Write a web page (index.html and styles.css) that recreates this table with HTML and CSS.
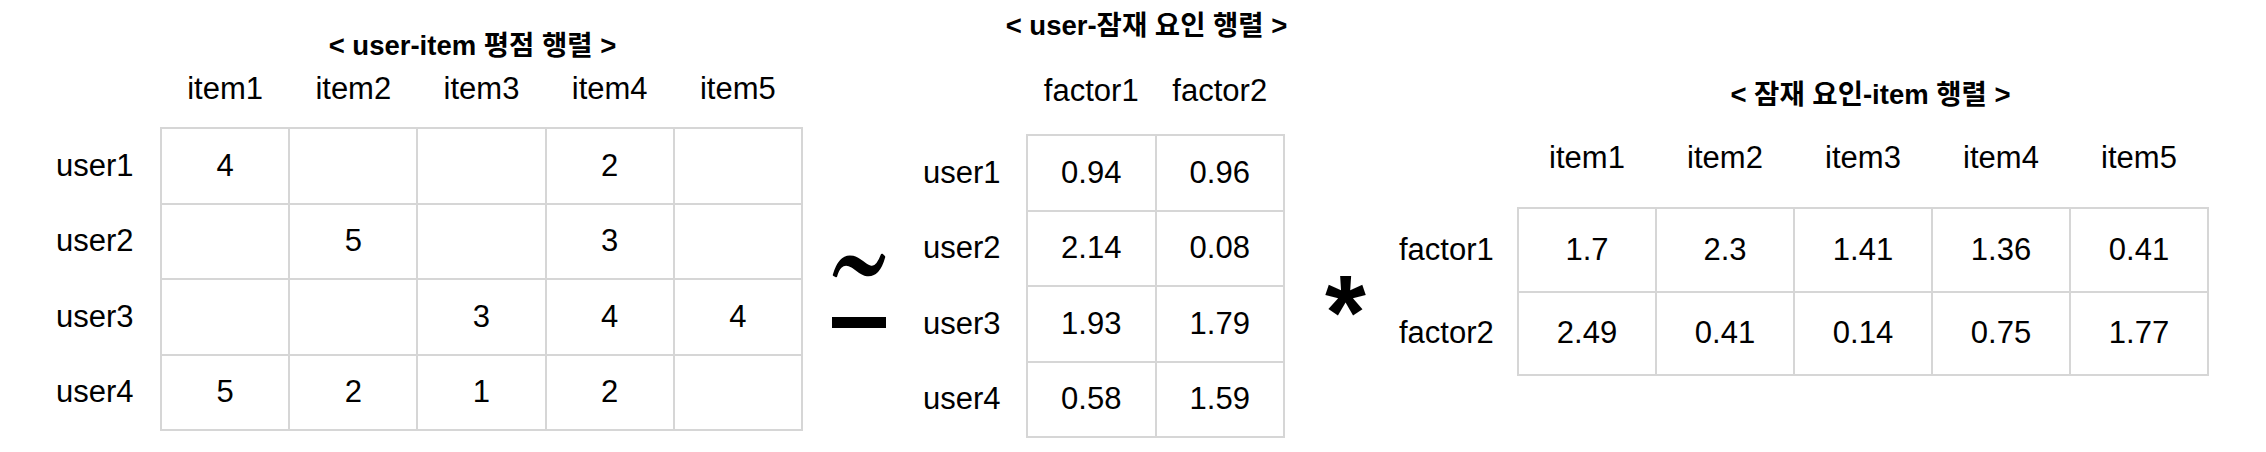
FILE: index.html
```html
<!DOCTYPE html>
<html lang="ko">
<head>
<meta charset="utf-8">
<title>행렬 분해</title>
<link rel="stylesheet" href="styles.css">
</head>
<body>
<div class="stage">

  <section class="mat mat-a">
    <div class="title">&lt; user-item 평점 행렬 &gt;</div>
    <div class="heads">
      <span>item1</span><span>item2</span><span>item3</span><span>item4</span><span>item5</span>
    </div>
    <div class="labels">
      <span>user1</span><span>user2</span><span>user3</span><span>user4</span>
    </div>
    <div class="cells">
      <span>4</span><span></span><span></span><span>2</span><span></span>
      <span></span><span>5</span><span></span><span>3</span><span></span>
      <span></span><span></span><span>3</span><span>4</span><span>4</span>
      <span>5</span><span>2</span><span>1</span><span>2</span><span></span>
    </div>
  </section>

  <div class="approx" aria-label="≃">
    <svg width="56" height="76" viewBox="0 0 56 76">
      <path d="M2,22 C6,8 12,2 21,4 C29,6 33,13 39,14 C44,15 47,10 50,2 L52,4 C49,15 44,23 35,22 C27,21 24,14 17,12 C10,10 6,15 4,23 Z" fill="#000" stroke="#000" stroke-width="2.5" stroke-linejoin="round"/>
      <rect x="0" y="64" width="54" height="11" fill="#000"/>
    </svg>
  </div>

  <section class="mat mat-b">
    <div class="title">&lt; user-잠재 요인 행렬 &gt;</div>
    <div class="heads">
      <span>factor1</span><span>factor2</span>
    </div>
    <div class="labels">
      <span>user1</span><span>user2</span><span>user3</span><span>user4</span>
    </div>
    <div class="cells">
      <span>0.94</span><span>0.96</span>
      <span>2.14</span><span>0.08</span>
      <span>1.93</span><span>1.79</span>
      <span>0.58</span><span>1.59</span>
    </div>
  </section>

  <div class="star">*</div>

  <section class="mat mat-c">
    <div class="title">&lt; 잠재 요인-item 행렬 &gt;</div>
    <div class="heads">
      <span>item1</span><span>item2</span><span>item3</span><span>item4</span><span>item5</span>
    </div>
    <div class="labels">
      <span>factor1</span><span>factor2</span>
    </div>
    <div class="cells">
      <span>1.7</span><span>2.3</span><span>1.41</span><span>1.36</span><span>0.41</span>
      <span>2.49</span><span>0.41</span><span>0.14</span><span>0.75</span><span>1.77</span>
    </div>
  </section>

</div>
</body>
</html>
```

FILE: styles.css
```css
html, body {
  margin: 0;
  padding: 0;
  background: #ffffff;
}

body {
  width: 2266px;
  height: 452px;
  overflow: hidden;
  font-family: "Liberation Sans", "Noto Sans CJK KR", sans-serif;
  color: #000;
}

.stage {
  display: flex;
  align-items: flex-start;
  padding-left: 56px;
}

/* ---------- matrix ---------- */
.mat {
  display: grid;
  grid-template-columns: var(--lw) var(--cw);
  grid-template-rows: 40px 40px auto;
  font-size: 31px;
}

.title {
  grid-column: 2;
  grid-row: 1;
  display: flex;
  justify-content: center;
  height: 40px;
  line-height: 40px;
  font-size: 27.5px;
  font-weight: bold;
  white-space: nowrap;
}

.heads {
  grid-column: 2;
  grid-row: 2;
  display: grid;
  grid-template-columns: repeat(var(--n), 1fr);
  column-gap: 2px;
  padding: 0 2px;
  height: 40px;
  line-height: 40px;
  text-align: center;
}

.labels {
  grid-column: 1;
  grid-row: 3;
  display: grid;
  grid-template-rows: repeat(var(--m), 1fr);
  row-gap: 2px;
  padding: 2px 0;
  height: var(--ch);
  box-sizing: border-box;
}

.labels span {
  display: flex;
  align-items: center;
}

.cells {
  grid-column: 2;
  grid-row: 3;
  display: grid;
  grid-template-columns: repeat(var(--n), 1fr);
  grid-template-rows: repeat(var(--m), 1fr);
  gap: 2px;
  padding: 2px;
  background: #d6d6d6;
  height: var(--ch);
  box-sizing: border-box;
}

.cells span {
  background: #fff;
  display: flex;
  align-items: center;
  justify-content: center;
}

/* user-item */
.mat-a {
  --lw: 104px;
  --cw: 643px;
  --ch: 304px;
  --n: 5;
  --m: 4;
  margin-top: 28px;
}
.mat-a .title { padding-right: 18px; margin-top: -2px; }
.mat-a .heads { margin-top: 1px; }
.mat-a .cells,
.mat-a .labels { margin-top: 19px; }

/* user-latent */
.mat-b {
  --lw: 103px;
  --cw: 259px;
  --ch: 304px;
  --n: 2;
  --m: 4;
  margin-top: 6px;
  margin-left: 37px;
}
.mat-b .title { padding-right: 18px; }
.mat-b .heads { margin-top: 25px; }
.mat-b .cells,
.mat-b .labels { margin-top: 48px; }

/* latent-item */
.mat-c {
  --lw: 118px;
  --cw: 692px;
  --ch: 169px;
  --n: 5;
  --m: 2;
  margin-top: 75px;
  margin-left: 33px;
}
.mat-c .title { padding-left: 15px; }
.mat-c .heads { margin-top: 23px; }
.mat-c .cells,
.mat-c .labels { margin-top: 52px; }

/* ---------- operators ---------- */
.approx {
  margin-left: 29px;
  margin-top: 253px;
  width: 54px;
  height: 76px;
}
.approx svg { display: block; }

.star {
  margin-left: 40px;
  margin-top: 260px;
  width: 41px;
  font-size: 105px;
  line-height: 105px;
  font-weight: bold;
}
```
